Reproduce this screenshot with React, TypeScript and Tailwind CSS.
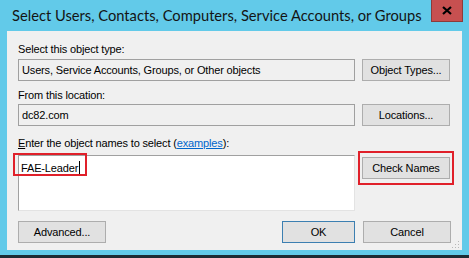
import React from 'react';

const ui = { fontFamily: '"Liberation Sans", Arial, sans-serif' };

function Btn({ children, primary = false }: { children: React.ReactNode; primary?: boolean }) {
  return (
    <div
      className={`flex h-[22px] w-[88px] items-center justify-center border bg-[#e1e1e1] text-[11px] text-black ${
        primary ? 'border-[#3c7fb1]' : 'border-[#adadad]'
      }`}
    >
      {children}
    </div>
  );
}

function ReadBox({ value }: { value: string }) {
  return (
    <div className="flex h-[22px] w-[337px] items-center border border-[#a0a0a0] bg-[#f0f0f0] px-[3px] text-[11px] tracking-[-0.15px] text-black">
      {value}
    </div>
  );
}

export default function App() {
  return (
    <div className="flex h-[258px] w-[469px] flex-col overflow-hidden border-b-[3px] border-[#1d2b33] bg-[#62cae9]" style={ui}>
      {/* Title bar */}
      <div className="flex h-[31px] shrink-0 items-start">
        <div
          className="min-w-0 flex-1 overflow-hidden whitespace-nowrap pl-[12px] pt-[5px] text-[14.7px] leading-[20px] text-[#141414]"
          style={{ fontFamily: 'Lato, "Open Sans", sans-serif' }}
        >
          Select Users, Contacts, Computers, Service Accounts, or Groups
        </div>
        <div className="mr-[6px] flex h-[22px] w-[32px] shrink-0 items-center justify-center border border-[#8c3b3b] border-t-0 bg-[#c75050]">
          <svg width="10" height="9" viewBox="0 0 10 9">
            <path d="M1 1 L9 8 M9 1 L1 8" stroke="#000" strokeWidth="2.2" />
          </svg>
        </div>
      </div>

      {/* Client area */}
      <div className="relative mx-[7px] flex h-[219px] shrink-0 flex-col bg-[#f0f0f0] px-[11px] text-[11px] tracking-[-0.15px] text-black">
        <div className="mt-[12px] leading-[13px]">Select this object type:</div>
        <div className="mt-[3px] flex items-center gap-[7px]">
          <ReadBox value="Users, Service Accounts, Groups, or Other objects" />
          <Btn>Object Types...</Btn>
        </div>

        <div className="mt-[8px] leading-[13px]">From this location:</div>
        <div className="mt-[2px] flex items-center gap-[7px]">
          <ReadBox value="dc82.com" />
          <Btn>Locations...</Btn>
        </div>

        <div className="mt-[11px] leading-[13px]">
          <span className="underline">E</span>nter the object names to select (
          <span className="text-[#0066cc] underline">examples</span>):
        </div>
        <div className="mt-[5px] flex items-start gap-[7px]">
          <div className="relative h-[56px] w-[337px] border border-[#a0a0a0] border-b-[#e3e3e3] border-r-[#e3e3e3] bg-white px-[2px] pt-[3px]">
            <span className="leading-[14px]">FAE-Leader</span>
            <span className="ml-[1px] inline-block h-[13px] w-px translate-y-[2px] bg-black" />
            <div className="absolute left-[-6px] top-[-3px] h-[23px] w-[74px] border-2 border-[#e0202a]" />
          </div>
          <div className="relative mt-[2px]">
            <Btn>Check Names</Btn>
            <div className="absolute inset-x-[-4px] inset-y-[-6px] border-2 border-[#e0202a]" />
          </div>
        </div>

        <div className="mt-[10px] flex items-center">
          <Btn>Advanced...</Btn>
          <div className="ml-auto flex gap-[8px]">
            <div className="flex h-[22px] w-[73px] items-center justify-center border border-[#3c7fb1] bg-[#e1e1e1]">OK</div>
            <Btn>Cancel</Btn>
          </div>
        </div>

        <svg className="absolute bottom-[1px] right-[2px]" width="8" height="8" viewBox="0 0 8 8">
          <rect x="6" y="0" width="1" height="1" fill="#b8b8b8" />
          <rect x="3" y="3" width="1" height="1" fill="#b8b8b8" />
          <rect x="6" y="3" width="1" height="1" fill="#b8b8b8" />
          <rect x="0" y="6" width="1" height="1" fill="#b8b8b8" />
          <rect x="3" y="6" width="1" height="1" fill="#b8b8b8" />
          <rect x="6" y="6" width="1" height="1" fill="#b8b8b8" />
        </svg>
      </div>
    </div>
  );
}
